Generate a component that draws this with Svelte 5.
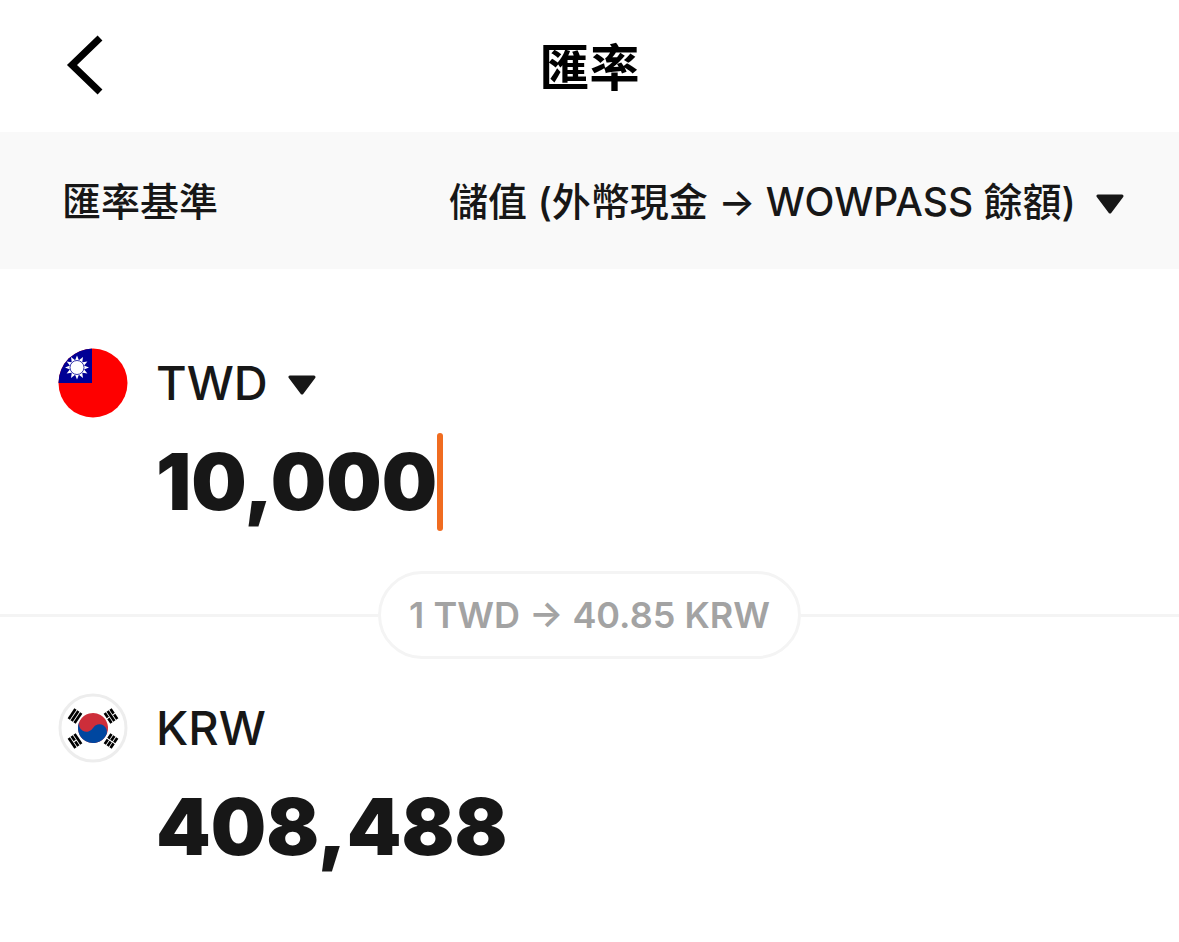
<script lang="ts">
	const basisOptions = ['儲值 (外幣現金 → WOWPASS 餘額)'];
	const currencies = ['TWD'];
	const rate = 40.8488;

	let basis = $state(basisOptions[0]);
	let currency = $state('TWD');
	let amount = $state('10,000');

	let converted = $derived(
		Math.round(Number(amount.replace(/[^\d.]/g, '')) * rate).toLocaleString('en-US')
	);

	// four trigrams of the Korean flag: position, tilt and which bars are split
	const trigrams = [
		{ x: 17, y: 23, tilt: -56, split: [false, false, false] },
		{ x: 53, y: 23, tilt: 56, split: [true, false, true] },
		{ x: 17, y: 48, tilt: 56, split: [false, true, false] },
		{ x: 53, y: 48, tilt: -56, split: [true, true, true] }
	];

	const rays = Array.from({ length: 12 }, (_, i) => i * 30);
</script>

{#snippet caret()}
	<svg class="arrow" viewBox="0 0 28 20" aria-hidden="true">
		<path d="M2 2H26L14 18Z" fill="#171717" stroke="#171717" stroke-width="3" stroke-linejoin="round" />
	</svg>
{/snippet}

<div class="page">
	<header class="topbar">
		<button class="back" type="button" aria-label="返回">
			<svg viewBox="0 0 40 64" aria-hidden="true">
				<path d="M36 4L8 31L36 58" fill="none" stroke="#000" stroke-width="7" />
			</svg>
		</button>
		<h1>匯率</h1>
	</header>

	<div class="basis">
		<label for="basis">匯率基準</label>
		<div class="picker">
			<select id="basis" bind:value={basis}>
				{#each basisOptions as option}
					<option>{option}</option>
				{/each}
			</select>
			{@render caret()}
		</div>
	</div>

	<main>
		<section class="entry from">
			<svg class="flag" viewBox="0 0 70 70" aria-hidden="true">
				<clipPath id="round"><circle cx="35" cy="35" r="34.500" /></clipPath>
				<g clip-path="url(#round)">
					<rect width="70" height="70" fill="#fe0000" />
					<rect width="34" height="35" fill="#000095" />
					<g fill="#fff">
						{#each rays as angle}
							<path d="M19 7.500L22 15H16Z" transform="rotate({angle} 19 19.500)" />
						{/each}
					</g>
					<circle cx="19" cy="19.500" r="7" fill="#fff" stroke="#000095" stroke-width="0.800" />
				</g>
			</svg>
			<div class="picker">
				<select class="code" aria-label="貨幣" bind:value={currency}>
					{#each currencies as code}
						<option>{code}</option>
					{/each}
				</select>
				{@render caret()}
			</div>
			<div class="amount">
				<input aria-label="金額" inputmode="decimal" autocomplete="off" bind:value={amount} />
				<span class="cursor" aria-hidden="true"></span>
			</div>
		</section>

		<div class="rate">
			<p>1 TWD → 40.85 KRW</p>
		</div>

		<section class="entry to">
			<svg class="flag" viewBox="0 0 70 70" aria-hidden="true">
				<circle cx="35" cy="35" r="33" fill="#fff" stroke="#ededed" stroke-width="3" />
				<g transform="rotate(30 35 35)">
					<circle cx="35" cy="35" r="15" fill="#cd2e3a" />
					<path d="M20 35A7.500 7.500 0 0 0 35 35A7.500 7.500 0 0 1 50 35A15 15 0 0 1 20 35Z" fill="#0047a0" />
				</g>
				{#each trigrams as t}
					<g transform="translate({t.x} {t.y}) rotate({t.tilt})" stroke="#000" stroke-width="2.700">
						{#each t.split as broken, i}
							<path d="M-6 {(i - 1) * 3.5}H6" stroke-dasharray={broken ? '5.500 1' : 'none'} />
						{/each}
					</g>
				{/each}
			</svg>
			<span class="code">KRW</span>
			<output class="amount">{converted}</output>
		</section>
	</main>
</div>

<style>
	:global(body) {
		margin: 0;
		background: #fff;
	}
	.page {
		color: #171717;
		font-family: Inter, 'Noto Sans CJK TC', sans-serif;
	}
	.topbar {
		display: grid;
		grid-template-columns: 1fr auto 1fr;
		align-items: center;
		padding: 34px 64px;
	}
	.back {
		justify-self: start;
		display: flex;
		padding: 0;
		border: 0;
		background: none;
		cursor: pointer;
	}
	.back svg {
		width: 40px;
		height: 64px;
	}
	h1 {
		margin: 0;
		padding-top: 4px;
		color: #000;
		font-size: 50px;
		line-height: 60px;
		font-weight: 700;
	}
	.basis {
		display: flex;
		align-items: center;
		justify-content: space-between;
		padding: 42px 55px 39px 62px;
		background: #f9f9f9;
		font-size: 39px;
		line-height: 56px;
		font-weight: 500;
	}
	.picker {
		display: flex;
		align-items: center;
	}
	select {
		appearance: none;
		margin: 0;
		padding: 0;
		border: 0;
		outline: none;
		background: none;
		color: inherit;
		font: inherit;
		cursor: pointer;
	}
	.arrow {
		width: 28px;
		height: 20px;
		margin: 3px 0 0 20px;
		pointer-events: none;
	}
	.entry {
		display: grid;
		grid-template-columns: 70px 1fr;
		column-gap: 28px;
		row-gap: 15px;
		align-items: center;
		padding: 0 58px;
	}
	.from {
		padding-top: 79px;
		padding-bottom: 40px;
	}
	.to {
		padding-top: 34px;
		padding-bottom: 40px;
	}
	.flag {
		width: 70px;
		height: 70px;
	}
	.code {
		font-size: 47px;
		line-height: 56px;
		font-weight: 500;
	}
	.amount {
		grid-column: 2;
		display: flex;
		align-items: center;
		height: 98px;
		font-size: 78px;
		line-height: 98px;
		font-weight: 900;
	}
	.amount input {
		field-sizing: content;
		min-width: 0;
		padding: 0;
		border: 0;
		outline: none;
		background: transparent;
		color: inherit;
		font: inherit;
		caret-color: transparent;
	}
	.cursor {
		width: 6px;
		height: 98px;
		border-radius: 3px;
		background: #f06c20;
	}
	.rate {
		display: flex;
		align-items: center;
	}
	.rate::before,
	.rate::after {
		content: '';
		flex: 1;
		height: 3px;
		background: #f4f4f4;
	}
	.rate p {
		margin: 0;
		padding: 0 28px;
		border: 3px solid #f4f4f4;
		border-radius: 44px;
		color: #a3a3a3;
		font-size: 36px;
		line-height: 82px;
		font-weight: 600;
	}
</style>
